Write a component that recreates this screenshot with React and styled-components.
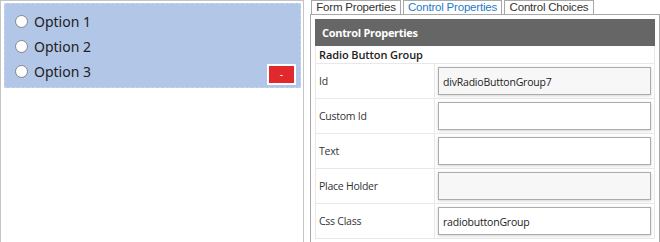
import React from "react";
import styled, { createGlobalStyle } from "styled-components";

const Global = createGlobalStyle`
  html, body { margin: 0; padding: 0; background: #fff; }
  body { font-family: "Noto Sans", "Open Sans", sans-serif; color: #333; }
`;

const Page = styled.div`
  display: flex;
  align-items: flex-start;
  width: 660px;
  height: 242px;
  overflow: hidden;
`;

const Canvas = styled.div`
  box-sizing: border-box;
  width: 304px;
  height: 260px;
  border: 1px solid #c4c4c4;
  padding: 2px 2px 0 3px;
  flex-shrink: 0;
`;

const GroupBox = styled.div`
  position: relative;
  box-sizing: border-box;
  height: 85px;
  background: #b2c6e7;
  border: 1px dashed #c6d4ec;
  padding: 6px 0 0 10px;
  display: flex;
  flex-direction: column;
  gap: 3px;
`;

const OptionRow = styled.label`
  display: flex;
  align-items: center;
  gap: 6px;
  height: 22px;
  font-family: "Noto Sans", sans-serif;
  font-size: 14px;
  color: #222;
`;

const RadioDot = styled.span`
  box-sizing: border-box;
  width: 13px;
  height: 13px;
  border-radius: 50%;
  border: 1px solid #8a8a8a;
  background: radial-gradient(circle at 50% 40%, #ffffff 55%, #ececec 100%);
`;

const RemoveBtn = styled.div`
  position: absolute;
  right: 4px;
  bottom: 2px;
  box-sizing: border-box;
  width: 29px;
  height: 21px;
  border: 2px solid #fff;
  background: #e1282d;
  color: #fff;
  font-family: "Liberation Sans", sans-serif;
  font-size: 10px;
  display: flex;
  align-items: center;
  justify-content: center;
  line-height: 1;
`;

const Side = styled.div`
  margin-left: 6px;
  width: 350px;
  display: flex;
  flex-direction: column;
  flex-shrink: 0;
`;

const Tabs = styled.div`
  display: flex;
  gap: 2px;
  padding-left: 1px;
  height: 14px;
`;

const Tab = styled.div`
  box-sizing: border-box;
  height: 15px;
  width: ${(p) => p.w}px;
  border: 1px solid #a8a8a8;
  border-bottom: none;
  font-family: "Liberation Sans", Arial, sans-serif;
  font-size: 11.5px;
  letter-spacing: -0.2px;
  line-height: 13px;
  text-align: center;
  white-space: nowrap;
  color: ${(p) => (p.active ? "#1f7ac8" : "#333")};
  background: #fff;
`;

const Panel = styled.div`
  box-sizing: border-box;
  border: 1px solid #a8a8a8;
  border-bottom: none;
  padding: 4px 4px 0 4px;
  height: 240px;
`;

const Table = styled.div`
  border-left: 1px solid #e8e8e8;
  border-right: 1px solid #e8e8e8;
`;

const Header = styled.div`
  height: 27px;
  margin: 0 -1px;
  background: #666666;
  color: #fff;
  font-family: "Open Sans", sans-serif;
  font-weight: 700;
  font-size: 11px;
  display: flex;
  align-items: center;
  padding-left: 7px;
  letter-spacing: -0.3px;
`;

const Section = styled.div`
  height: 17px;
  border-bottom: 1px solid #e8e8e8;
  font-family: "Open Sans", sans-serif;
  font-weight: 600;
  font-size: 11px;
  color: #222;
  display: flex;
  align-items: center;
  padding-left: 3px;
  letter-spacing: -0.1px;
`;

const Row = styled.div`
  display: grid;
  grid-template-columns: 119px 1fr;
  height: 35px;
  box-sizing: border-box;
  border-bottom: 1px solid #e8e8e8;
`;

const Label = styled.div`
  border-right: 1px solid #e8e8e8;
  font-family: "Open Sans", sans-serif;
  font-size: 10.5px;
  color: #333;
  display: flex;
  align-items: center;
  padding-left: 3px;
  letter-spacing: -0.25px;
`;

const Field = styled.div`
  padding: 3px 3px 0 3px;
`;

const Input = styled.div`
  box-sizing: border-box;
  height: 28px;
  border: 1px solid #ababab;
  background: ${(p) => (p.readOnly ? "#f7f7f7" : "#fff")};
  box-shadow: 0 1px 3px rgba(0, 0, 0, 0.18);
  font-family: "Open Sans", sans-serif;
  font-size: 10.5px;
  color: #222;
  display: flex;
  align-items: center;
  padding-left: 4px;
  padding-top: 2px;
  letter-spacing: -0.2px;
`;

const rows = [
  { label: "Id", value: "divRadioButtonGroup7", readOnly: true },
  { label: "Custom Id", value: "" },
  { label: "Text", value: "" },
  { label: "Place Holder", value: "", readOnly: true },
  { label: "Css Class", value: "radiobuttonGroup" },
];

export default function App() {
  return (
    <>
      <Global />
      <Page>
        <Canvas>
          <GroupBox>
            {["Option 1", "Option 2", "Option 3"].map((o) => (
              <OptionRow key={o}>
                <RadioDot />
                {o}
              </OptionRow>
            ))}
            <RemoveBtn>-</RemoveBtn>
          </GroupBox>
        </Canvas>
        <Side>
          <Tabs>
            <Tab w={90}>Form Properties</Tab>
            <Tab w={99} active>
              Control Properties
            </Tab>
            <Tab w={90}>Control Choices</Tab>
          </Tabs>
          <Panel>
            <Table>
              <Header>Control Properties</Header>
              <Section>Radio Button Group</Section>
              {rows.map((r) => (
                <Row key={r.label}>
                  <Label>{r.label}</Label>
                  <Field>
                    <Input readOnly={r.readOnly}>{r.value}</Input>
                  </Field>
                </Row>
              ))}
            </Table>
          </Panel>
        </Side>
      </Page>
    </>
  );
}
